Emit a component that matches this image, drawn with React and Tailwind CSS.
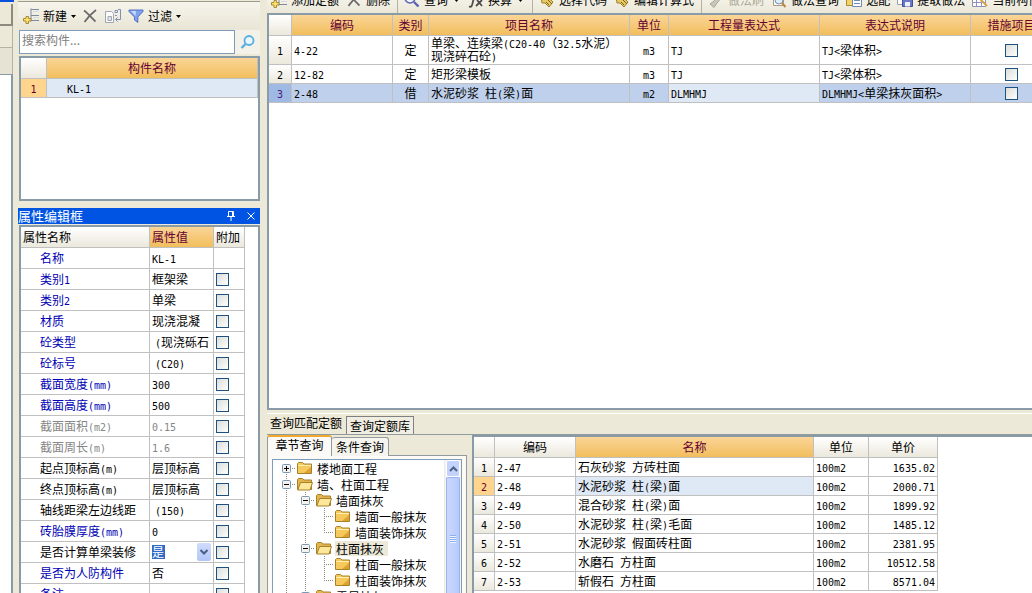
import { useState } from 'react'

const buildRows = [
  { id: 1, code: '4-22', type: '定', name: ['单梁、连续梁(C20-40（32.5水泥）', '现浇碎石砼)'], unit: 'm3', expr: 'TJ', desc: 'TJ<梁体积>' },
  { id: 2, code: '12-82', type: '定', name: ['矩形梁模板'], unit: 'm3', expr: 'TJ', desc: 'TJ<梁体积>' },
  { id: 3, code: '2-48', type: '借', name: ['水泥砂浆 柱(梁)面'], unit: 'm2', expr: 'DLMHMJ', desc: 'DLMHMJ<单梁抹灰面积>' },
]

const properties = [
  { name: '名称', value: 'KL-1', tone: 'blue', noCheck: true },
  { name: '类别1', value: '框架梁', tone: 'blue' },
  { name: '类别2', value: '单梁', tone: 'blue' },
  { name: '材质', value: '现浇混凝', tone: 'blue' },
  { name: '砼类型', value: '(现浇砾石', tone: 'blue', inherited: true },
  { name: '砼标号', value: '(C20)', tone: 'blue', inherited: true },
  { name: '截面宽度(mm)', value: '300', tone: 'blue' },
  { name: '截面高度(mm)', value: '500', tone: 'blue' },
  { name: '截面面积(m2)', value: '0.15', tone: 'gray' },
  { name: '截面周长(m)', value: '1.6', tone: 'gray' },
  { name: '起点顶标高(m)', value: '层顶标高', tone: 'black' },
  { name: '终点顶标高(m)', value: '层顶标高', tone: 'black' },
  { name: '轴线距梁左边线距', value: '(150)', tone: 'black', inherited: true },
  { name: '砖胎膜厚度(mm)', value: '0', tone: 'blue' },
  { name: '是否计算单梁装修', value: '是', tone: 'black', editing: true },
  { name: '是否为人防构件', value: '否', tone: 'blue' },
  { name: '备注', value: '', tone: 'blue' },
]

const quotaRows = [
  { id: 1, code: '2-47', name: '石灰砂浆 方砖柱面', price: '1635.02' },
  { id: 2, code: '2-48', name: '水泥砂浆 柱(梁)面', price: '2000.71' },
  { id: 3, code: '2-49', name: '混合砂浆 柱(梁)面', price: '1899.92' },
  { id: 4, code: '2-50', name: '水泥砂浆 柱(梁)毛面', price: '1485.12' },
  { id: 5, code: '2-51', name: '水泥砂浆 假面砖柱面', price: '2381.95' },
  { id: 6, code: '2-52', name: '水磨石 方柱面', price: '10512.58' },
  { id: 7, code: '2-53', name: '斩假石 方柱面', price: '8571.04' },
]

// cells: guide drawn in each indent column, left to right
const treeRows = [
  { label: '楼地面工程', cells: ['plusFirst'] },
  { label: '墙、柱面工程', cells: ['minus'], open: true },
  { label: '墙面抹灰', cells: ['line', 'minus'], open: true },
  { label: '墙面一般抹灰', cells: ['line', 'line', 'tee'] },
  { label: '墙面装饰抹灰', cells: ['line', 'line', 'elbow'] },
  { label: '柱面抹灰', cells: ['line', 'minus'], open: true, selected: true },
  { label: '柱面一般抹灰', cells: ['line', 'line', 'tee'] },
  { label: '柱面装饰抹灰', cells: ['line', 'line', 'elbow'] },
  { label: '零星抹灰', cells: ['line', 'minus'], open: true },
]

const toneClass = {
  blue: 'text-[#0000b4]',
  gray: 'text-[#868686]',
  black: 'text-black',
}

const headGold = 'bg-linear-to-b from-[#fad596] to-[#f2be5c] text-[#660033]'
const headPlain = 'bg-linear-to-b from-white to-[#ebe8dc] text-black'
const cell = 'border-r border-b border-[#c0c0c0] px-0.5 py-0 font-normal leading-[14px] whitespace-nowrap overflow-hidden'

// Latin runs are half the width of a Chinese character
const Txt = ({ children }) => (
  <>
    {String(children).split(/([\x20-\x7e]+)/).map((part, i) =>
      i % 2 ? <span key={i} className="font-['DejaVu_Sans_Mono',monospace] text-[10px] leading-none whitespace-pre">{part}</span> : part
    )}
  </>
)

const Check = ({ label }) => (
  <input
    type="checkbox"
    aria-label={label}
    className="block size-[13px] appearance-none border border-[#1c5180] bg-linear-to-br from-[#dcdcd7] to-white checked:bg-[#21a121]"
  />
)

const Caret = () => (
  <svg className="w-[5px] h-[3px]" viewBox="0 0 5 3"><path d="M0 0h5L2.5 3z" fill="#000" /></svg>
)

const NewIcon = () => (
  <svg className="size-4 shrink-0" viewBox="0 0 16 16" fill="none">
    <path d="M8 .5v13M8 1.5h8M8 7.5h8M8 12.5h8" stroke="#7d8ba3" />
    <path d="M10 3.5h6M10 9.5h6" stroke="#d5dbe5" />
    <path d="M3 8.5h2.5v2H8V13H5.500v2.500H3V13H.5v-2.500H3z" fill="#ffe36b" stroke="#a8893a" />
  </svg>
)

const CrossIcon = () => (
  <svg className="size-4 shrink-0" viewBox="0 0 16 16" fill="none">
    <path d="M2 2.500c3 2 7 6.500 11.500 11M14 2C10 5 6 9 2.500 14" stroke="#6b6b6b" strokeWidth="1.800" />
  </svg>
)

const CopyIcon = () => (
  <svg className="size-4 shrink-0" viewBox="0 0 16 16" fill="none">
    <path d="M.5 3.500h6l2 2v9h-8z" fill="#fafafa" stroke="#a2a6ae" />
    <path d="M3 8.500h3.500v4H3z" fill="#dfe3ea" stroke="#a2a6ae" />
    <path d="M10 2.500h2.500v2H10zM13 1.500h2.500v10H11M12.500 9.500l-2 2 2 2M10 7.500h2" stroke="#8190b5" />
  </svg>
)

const FilterIcon = () => (
  <svg className="size-4 shrink-0" viewBox="0 0 16 16">
    <path d="M1 2h14v1.500L9.800 9v5.500L6.500 12V9L1 3.500z" fill="#7ea2ec" stroke="#5373c4" />
    <path d="M3 3h5L7.500 8z" fill="#c8daff" />
  </svg>
)

const SearchIcon = ({ color }) => (
  <svg className="size-4 shrink-0" viewBox="0 0 16 16" fill="none">
    <circle cx="9" cy="6.500" r="4.500" fill="#e9f7ff" stroke={color} strokeWidth="1.800" />
    <path d="M5.500 10L1.500 14" stroke={color} strokeWidth="2.400" />
  </svg>
)

const QueryIcon = () => (
  <svg className="size-4 shrink-0" viewBox="0 0 16 16" fill="none">
    <circle cx="6" cy="6" r="5" fill="#eef3ff" stroke="#5b62b0" strokeWidth="1.500" />
    <path d="M10 10l4.500 4.500" stroke="#5b62b0" strokeWidth="2.400" />
  </svg>
)

const FxIcon = () => (
  <svg className="size-4 shrink-0" viewBox="0 0 16 16" fill="none">
    <path d="M1 14.500c3 1 3-1 4-5L6.500 4c.5-2 2-3 4-2M4 7h5M9 8l5 6M14 8l-6 6" stroke="#4d4d4d" strokeWidth="1.800" />
  </svg>
)

const TagIcon = () => (
  <svg className="size-4 shrink-0" viewBox="0 0 16 16">
    <path d="M2 4h6l6 6-4 5-4-4H3z" fill="#e8c95f" stroke="#9b7d2c" />
    <path d="M9 8l4 4M7 10l3 3" stroke="#7a6224" />
  </svg>
)

const BrushIcon = () => (
  <svg className="size-4 shrink-0" viewBox="0 0 16 16">
    <path d="M6 9l7-7 2 2-6 7-3 4.500-4-3.500z" fill="#c9c6bb" stroke="#aaa79b" />
  </svg>
)

const PageSearchIcon = () => (
  <svg className="size-4 shrink-0" viewBox="0 0 16 16" fill="none">
    <path d="M2.500.5h10v13h-10z" fill="#fff" stroke="#a99a86" />
    <circle cx="8" cy="8" r="4" fill="#dceefa" stroke="#7d8fa6" />
    <path d="M11 11l3.500 4" stroke="#b88848" strokeWidth="2" />
  </svg>
)

const MatchIcon = () => (
  <svg className="size-4 shrink-0" viewBox="0 0 16 16">
    <path d="M.5 1.500h9v12h-9z" fill="#f2d36c" stroke="#ab8a35" />
    <path d="M6.500 5.500h9v9h-9z" fill="#fff" stroke="#718bb0" />
    <path d="M8 8.500h6M8 11.500h6" stroke="#718bb0" />
  </svg>
)

const SaveIcon = () => (
  <svg className="size-4 shrink-0" viewBox="0 0 16 16">
    <path d="M.5 1.500h7v11h-7z" fill="#fff" stroke="#9aa2b5" />
    <path d="M5.500 4.500h10v10h-10z" fill="#6b78c6" stroke="#454f96" />
    <path d="M8 10h5v4.500H8zM7.500 5h6v3h-6z" fill="#eef0fc" />
  </svg>
)

const GridPenIcon = () => (
  <svg className="size-4 shrink-0" viewBox="0 0 16 16" fill="none">
    <path d="M.5 2.500h13v12H.5zM.5 6.500h13M.5 10.500h13M4.500 2.500v12M9.500 2.500v12" fill="#fff" stroke="#9190bd" />
    <path d="M5 4l10 10" stroke="#d9a441" strokeWidth="2" />
  </svg>
)

const Folder = ({ open }) => (
  <svg className="size-4 shrink-0" viewBox="0 0 16 16">
    <path d="M.5 3.500l1-1h4l1.500 1.500h7.500v9.500H.5z" fill={open ? '#e3b64d' : '#f5c95b'} stroke="#a7802a" />
    {open
      ? <path d="M3.500 6.500h12l-2.500 7.500H.8z" fill="#fde79b" stroke="#a7802a" />
      : <path d="M1.500 5.500h12.500" stroke="#fff0b8" />}
    {!open && <path d="M7 13l7-6v6z" fill="#e0a22f" />}
  </svg>
)

const Guide = ({ kind }) => {
  const box = kind === 'minus' || kind === 'plusFirst'
  return (
    <svg className="w-[19px] h-4 shrink-0" viewBox="0 0 19 16" fill="none">
      {kind !== 'plusFirst' && <path d="M9.500 0v8" stroke="#8c8a80" strokeDasharray="1 1" />}
      {kind !== 'elbow' && <path d="M9.500 8v8" stroke="#8c8a80" strokeDasharray="1 1" />}
      {kind !== 'line' && <path d="M9 8.500h10" stroke="#8c8a80" strokeDasharray="1 1" />}
      {box && <rect x="5.500" y="4.500" width="8" height="8" rx="1" fill="#f4f2ea" stroke="#7b97b3" />}
      {box && <path d="M7 8.500h5" stroke="#000" />}
      {kind === 'plusFirst' && <path d="M9.500 6v5" stroke="#000" />}
    </svg>
  )
}

const tools = [
  { label: '添加定额', Icon: NewIcon },
  { label: '删除', Icon: CrossIcon },
  null,
  { label: '查询', Icon: QueryIcon, menu: true },
  { label: '换算', Icon: FxIcon, menu: true },
  null,
  { label: '选择代码', Icon: TagIcon },
  { label: '编辑计算式', Icon: TagIcon },
  null,
  { label: '做法刷', Icon: BrushIcon, disabled: true },
  { label: '做法查询', Icon: PageSearchIcon },
  { label: '选配', Icon: MatchIcon },
  { label: '提取做法', Icon: SaveIcon },
  { label: '当前构件', Icon: GridPenIcon },
]

const MainToolbar = () => (
  <div className="flex h-[13px] shrink-0 items-end gap-[7px] overflow-hidden bg-linear-to-b from-[#f3f1e6] to-[#ebe8d8] pl-1">
    {tools.map((t, i) =>
      t ? (
        <button
          key={t.label}
          disabled={t.disabled}
          className="flex h-6 shrink-0 items-center gap-1 pb-0.5 leading-4 whitespace-nowrap disabled:text-[#aca899]"
        >
          <t.Icon />
          {t.label}
          {t.menu && <span className="px-0.5"><Caret /></span>}
        </button>
      ) : (
        <span key={i} className="-mr-px h-full w-px shrink-0 bg-[#b5b2a4]" />
      )
    )}
  </div>
)

const ComponentList = () => (
  <>
    <div className="mt-px flex h-[29px] shrink-0 items-center border-t border-[#9d9a8c] bg-linear-to-b from-[#f6f4ec] to-[#e9e6d6] pl-[5px]">
      <button className="flex items-center gap-1"><NewIcon />新建<Caret /></button>
      <button className="ml-1.5" aria-label="删除"><CrossIcon /></button>
      <button className="ml-[7px]" aria-label="复制"><CopyIcon /></button>
      <button className="ml-[7px] flex items-center gap-1"><FilterIcon />过滤<Caret /></button>
    </div>
    <div className="flex h-6 shrink-0">
      <input
        type="text"
        aria-label="搜索构件"
        placeholder="搜索构件..."
        className="ml-px min-w-0 flex-1 border border-[#7f9db9] bg-white px-0.5 pb-1 outline-none placeholder:text-[#808080]"
      />
      <button className="flex w-[25px] items-center justify-center bg-[#f3f1e8]" aria-label="搜索"><SearchIcon color="#5aaee0" /></button>
    </div>
    <div className="mt-0.5 ml-px h-[145px] shrink-0 border-2 border-[#8a9ba8] bg-white">
      <table className="w-full table-fixed border-separate border-spacing-0">
        <colgroup><col className="w-[26px]" /><col /></colgroup>
        <thead>
          <tr>
            <th className={`${cell} ${headPlain} h-[21px]`}></th>
            <th className={`${cell} ${headGold}`}>构件名称</th>
          </tr>
        </thead>
        <tbody>
          <tr>
            <td className={`${cell} h-[19px] bg-[#ffd58d] text-center text-[#660033]`}><Txt>1</Txt></td>
            <td className={`${cell} bg-[#dfe8f5]`}><span className="pl-[18px]"><Txt>KL-1</Txt></span></td>
          </tr>
        </tbody>
      </table>
    </div>
  </>
)

const PropertyEditor = () => (
  <>
    <div className="mt-[7px] flex h-4 shrink-0 items-center bg-[#0054e3] pr-[3px] text-white">
      <h2 className="flex-1 text-[13px] leading-4">属性编辑框</h2>
      <button aria-label="固定" className="mr-2">
        <svg className="w-3 h-3" viewBox="0 0 12 12" fill="none" stroke="#fff">
          <path d="M3.500 6.500v-5h5v5M2 6.500h8M6 7v4" /><path d="M7.500 2v4" />
        </svg>
      </button>
      <button aria-label="关闭">
        <svg className="w-3 h-3" viewBox="0 0 12 12" fill="none" stroke="#fff"><path d="M2.500 2.500l7 7M9.500 2.500l-7 7" /></svg>
      </button>
    </div>
    <div className="mt-px ml-px min-h-0 flex-1 overflow-hidden border-2 border-b-0 border-[#8a9ba8] bg-white">
      <table className="w-[224px] table-fixed border-separate border-spacing-0">
        <colgroup><col className="w-[129px]" /><col className="w-16" /><col className="w-[31px]" /></colgroup>
        <thead>
          <tr className="text-left">
            <th className={`${cell} ${headPlain} h-[21px]`}>属性名称</th>
            <th className={`${cell} ${headGold}`}>属性值</th>
            <th className={`${cell} ${headPlain}`}>附加</th>
          </tr>
        </thead>
        <tbody>
          {properties.map((p) => (
            <tr key={p.name} className={toneClass[p.tone]}>
              <td className={`${cell} h-[21px]`}><span className="pl-[17px]"><Txt>{p.name}</Txt></span></td>
              <td className={`${cell} ${p.tone === 'gray' ? '' : 'text-black'}`}>
                {p.editing ? (
                  <div className="flex h-[18px] items-center justify-between">
                    <select
                      aria-label={p.name}
                      className="h-[14px] w-[13px] appearance-none bg-[#316ac5] leading-[14px] text-white outline-none"
                      defaultValue={p.value}
                    >
                      <option>是</option>
                      <option>否</option>
                    </select>
                    <span className="flex h-[18px] w-[14px] items-center justify-center rounded-[2px] bg-linear-to-b from-[#d0dcfc] to-[#b2c6f7]">
                      <svg className="w-2 h-2" viewBox="0 0 8 8" fill="none"><path d="M0.500 2L4 5.500 7.500 2" stroke="#4d6185" strokeWidth="2" /></svg>
                    </span>
                  </div>
                ) : (
                  <span className={p.inherited ? 'pl-[3px]' : ''}><Txt>{p.value}</Txt></span>
                )}
              </td>
              <td className={cell}>{!p.noCheck && <Check label={`${p.name} 附加`} />}</td>
            </tr>
          ))}
        </tbody>
      </table>
    </div>
  </>
)

const BuildTable = () => {
  const [selected, setSelected] = useState(3)

  return (
    <div className="min-h-0 flex-1 overflow-hidden border-2 border-r-0 border-[#8a9ba8] bg-white">
      <table className="w-[784px] table-fixed border-separate border-spacing-0">
        <colgroup>
          <col className="w-[23px]" /><col className="w-[101px]" /><col className="w-9" /><col className="w-[201px]" />
          <col className="w-[39px]" /><col className="w-[151px]" /><col className="w-[151px]" /><col className="w-[82px]" />
        </colgroup>
        <thead>
          <tr>
            <th className={`${cell} ${headPlain} h-[21px]`}></th>
            {['编码', '类别', '项目名称', '单位', '工程量表达式', '表达式说明', '措施项目'].map((h) => (
              <th key={h} className={`${cell} ${headGold}`}>{h}</th>
            ))}
          </tr>
        </thead>
        <tbody>
          {buildRows.map((r) => {
            const on = r.id === selected
            return (
              <tr key={r.id} onClick={() => setSelected(r.id)} className={on ? 'bg-[#bfd0ec]' : ''}>
                <td className={`${cell} text-center ${on ? 'bg-[#9db9e4] text-[#4b1a7a]' : headPlain} ${r.name.length > 1 ? 'h-[29px]' : 'h-[19px]'}`}><Txt>{r.id}</Txt></td>
                <td className={cell}><Txt>{r.code}</Txt></td>
                <td className={`${cell} text-center`}>{r.type}</td>
                <td className={cell}>
                  {r.name.map((line) => <div key={line} className="leading-3"><Txt>{line}</Txt></div>)}
                </td>
                <td className={`${cell} text-center`}><Txt>{r.unit}</Txt></td>
                <td className={`${cell} ${on ? 'bg-[#dfe8f5]' : ''}`}><Txt>{r.expr}</Txt></td>
                <td className={cell}><Txt>{r.desc}</Txt></td>
                <td className={cell}><div className="flex justify-center"><Check label={`${r.code} 措施项目`} /></div></td>
              </tr>
            )
          })}
        </tbody>
      </table>
    </div>
  )
}

const ChapterTree = () => (
  <div className="flex w-[200px] shrink-0 flex-col">
    <div className="flex h-[21px] shrink-0 items-end">
      <button className="h-[21px] w-[65px] rounded-t-[3px] border-t-2 border-r border-l border-t-[#f0a830] border-r-[#919b9c] border-l-[#919b9c] bg-[#fbfaf7] pb-1">章节查询</button>
      <button className="h-[19px] w-[57px] rounded-t-[3px] border-t border-r border-[#919b9c] bg-[#f5f4ee]">条件查询</button>
      <span className="h-px flex-1 bg-[#919b9c]" />
    </div>
    <div className="min-h-0 flex-1 border-x border-[#919b9c] bg-[#fbfaf7] px-1 pt-[3px]">
      <div className="flex h-full overflow-hidden border border-b-0 border-[#7f9db9] bg-white">
        <ul className="flex-1 pl-1">
          {treeRows.map((r) => (
            <li key={r.label} className="flex h-4 items-center whitespace-nowrap">
              {r.cells.map((c, i) => <Guide key={i} kind={c} />)}
              <span className="ml-px"><Folder open={r.open} /></span>
              <span className={`ml-[3px] px-px leading-[15px] ${r.selected ? 'bg-[#ece9d8] pr-1' : ''}`}>{r.label}</span>
            </li>
          ))}
        </ul>
        <div className="flex w-[17px] flex-col border-l border-[#eeede5] bg-[#f4f3ee] px-px">
          <button aria-label="向上滚动" className="flex h-[17px] items-center justify-center rounded-[2px] border border-white bg-[#c3d3fd]">
            <svg className="w-[9px] h-2" viewBox="0 0 9 8" fill="none"><path d="M1 6l3.500-3.500L8 6" stroke="#4d6185" strokeWidth="2" /></svg>
          </button>
          <div className="flex flex-1 justify-center rounded-t-[2px] border-x border-t border-[#98b4ee] bg-linear-to-r from-[#cad8ff] to-[#b7cafa] pt-[57px]">
            <div className="h-2 w-1.5 bg-[repeating-linear-gradient(#8cb0f8_0_1px,#eef4fe_1px_2px)]" />
          </div>
        </div>
      </div>
    </div>
  </div>
)

const QuotaTable = () => {
  const [selected, setSelected] = useState(2)

  return (
    <div className="ml-[5px] flex-1 overflow-hidden border-t-2 border-l-2 border-[#8a9ba8] bg-white">
      <table className="w-[464px] table-fixed border-separate border-spacing-0">
        <colgroup>
          <col className="w-[21px]" /><col className="w-[81px]" /><col className="w-[238px]" /><col className="w-[55px]" /><col className="w-[69px]" />
        </colgroup>
        <thead>
          <tr>
            <th className={`${cell} ${headPlain} h-[21px]`}></th>
            <th className={`${cell} ${headPlain}`}>编码</th>
            <th className={`${cell} ${headGold}`}>名称</th>
            <th className={`${cell} ${headPlain}`}>单位</th>
            <th className={`${cell} ${headPlain}`}>单价</th>
          </tr>
        </thead>
        <tbody>
          {quotaRows.map((r) => {
            const on = r.id === selected
            return (
              <tr key={r.id} onClick={() => setSelected(r.id)}>
                <td className={`${cell} h-[19px] text-center ${on ? 'bg-[#ffd58d] text-[#660033]' : headPlain}`}><Txt>{r.id}</Txt></td>
                <td className={cell}><Txt>{r.code}</Txt></td>
                <td className={`${cell} ${on ? 'bg-[#dfe8f5]' : ''}`}><Txt>{r.name}</Txt></td>
                <td className={cell}><Txt>100m2</Txt></td>
                <td className={`${cell} text-right`}><Txt>{r.price}</Txt></td>
              </tr>
            )
          })}
        </tbody>
      </table>
    </div>
  )
}

const App = () => {
  return (
    <div className="flex h-screen overflow-hidden bg-[#ece9d8] font-['Noto_Sans_CJK_SC',sans-serif] text-xs leading-4 text-black">
      {/* Edge of the navigation panel */}
      <div className="flex w-[14px] shrink-0 flex-col">
        <div className="h-0.5 bg-[#0a50dc]" />
        <div className="mt-0.5 mr-px h-[22px] border-r-2 border-b-2 border-[#8d8a7e] bg-[#ece9d8]" />
        <div className="mr-px h-[22px] border-r border-b border-[#b5b2a4]" />
        <div className="mr-px h-[26px] border-r border-[#b5b2a4] bg-[#e6e3d4]" />
        <div className="mr-px flex-1 border-t border-r-2 border-[#8a9ba8] bg-white" />
      </div>

      <aside className="ml-1 flex w-[242px] shrink-0 flex-col">
        <ComponentList />
        <PropertyEditor />
      </aside>

      <main className="ml-[7px] flex min-w-0 flex-1 flex-col">
        <MainToolbar />
        <BuildTable />

        {/* Quota lookup */}
        <section className="mt-[3px] flex h-[180px] shrink-0 flex-col border-t border-white">
          <div className="flex h-5 shrink-0 items-end">
            <button className="h-5 px-[3px] pb-0.5 whitespace-nowrap">查询匹配定额</button>
            <button className="ml-px h-[18px] border border-b-0 border-[#808080] bg-[#f0eee2] px-[3px] whitespace-nowrap">查询定额库</button>
          </div>
          <div className="flex min-h-0 flex-1 border-t border-[#919b9c]">
            <ChapterTree />
            <QuotaTable />
          </div>
        </section>
      </main>
    </div>
  )
}

export default App
